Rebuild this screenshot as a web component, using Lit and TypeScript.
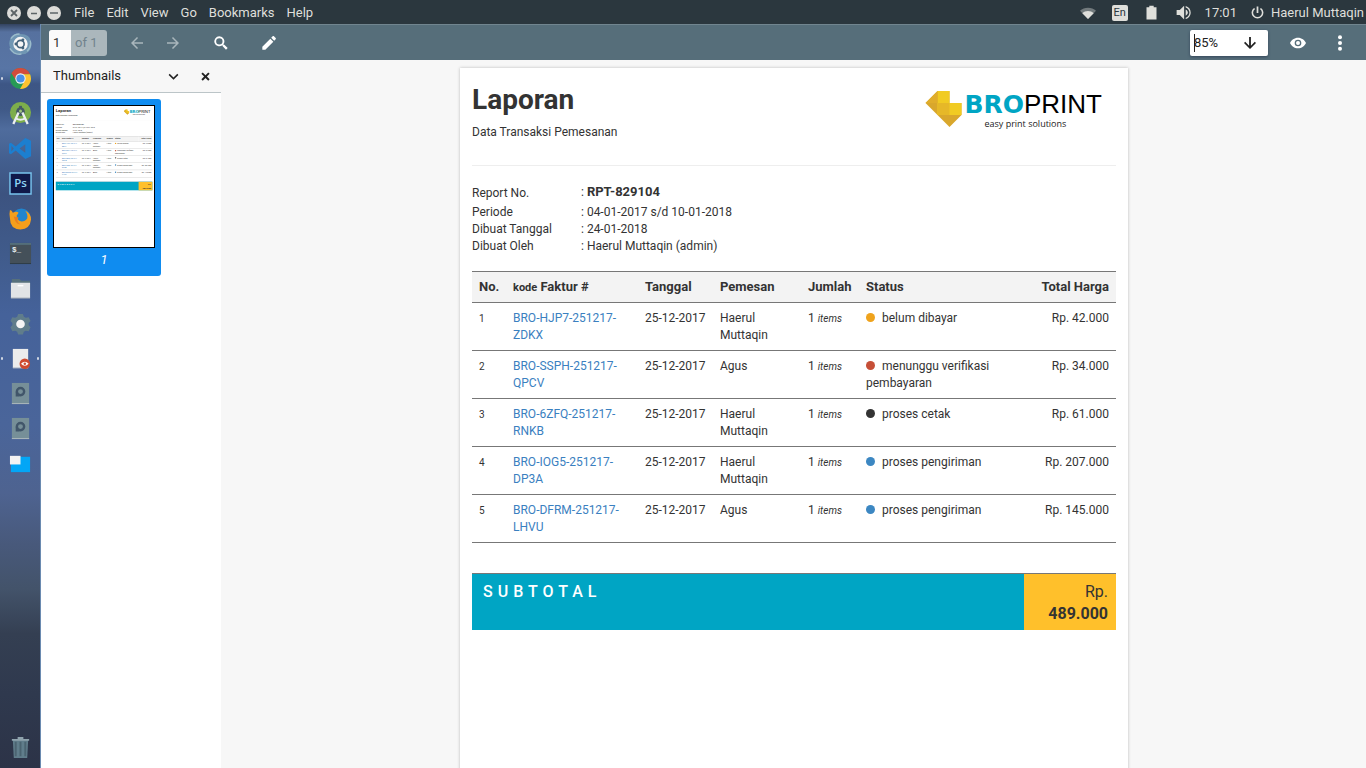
import { LitElement, html, css, svg } from "lit";
import { customElement, property } from "lit/decorators.js";
import { styleMap } from "lit/directives/style-map.js";

interface Order {
  code: string;
  customer: string;
  status: string;
  color: string;
  total: string;
}

const ORDERS: Order[] = [
  { code: "BRO-HJP7-251217-ZDKX", customer: "Haerul Muttaqin", status: "belum dibayar", color: "#efa31d", total: "Rp. 42.000" },
  { code: "BRO-SSPH-251217-QPCV", customer: "Agus", status: "menunggu verifikasi pembayaran", color: "#c64f37", total: "Rp. 34.000" },
  { code: "BRO-6ZFQ-251217-RNKB", customer: "Haerul Muttaqin", status: "proses cetak", color: "#333333", total: "Rp. 61.000" },
  { code: "BRO-IOG5-251217-DP3A", customer: "Haerul Muttaqin", status: "proses pengiriman", color: "#3c87c2", total: "Rp. 207.000" },
  { code: "BRO-DFRM-251217-LHVU", customer: "Agus", status: "proses pengiriman", color: "#3c87c2", total: "Rp. 145.000" },
];

@customElement("bro-report")
export class BroReport extends LitElement {
  static styles = css`
    :host {
      display: block;
      box-sizing: border-box;
      padding: 12px;
      background: #fff;
      color: #333;
      font: 12px/17px Roboto, sans-serif;
    }
    .head {
      display: flex;
      justify-content: space-between;
      align-items: flex-start;
      padding-bottom: 24px;
      border-bottom: 1px solid #eee;
    }
    h1 {
      margin: 0;
      font-size: 28px;
      line-height: 39px;
      font-weight: 700;
    }
    .subtitle {
      margin: 5px 0 0;
    }
    .logo {
      display: flex;
      padding: 10px 14px 0 0;
    }
    .mark {
      width: 38px;
      height: 38px;
    }
    .word {
      padding-left: 1px;
      color: #000;
      font: 26px/28px "Liberation Sans", Arial, sans-serif;
      white-space: nowrap;
    }
    .word b {
      color: #00a5c4;
      font-family: "DejaVu Sans", sans-serif;
      font-size: 25px;
      font-weight: 700;
    }
    .tag {
      display: block;
      padding-left: 20px;
      color: #222;
      font: 9px/9px "Open Sans", sans-serif;
    }
    .info {
      display: grid;
      grid-template-columns: 109px 1fr;
      grid-template-rows: 21px;
      margin: 17px 0 16px;
    }
    .info dt {
      align-self: center;
    }
    .info dd {
      margin: 0;
    }
    .info b {
      font-size: 13px;
    }
    table {
      width: 100%;
      border-collapse: separate;
      border-spacing: 0;
      table-layout: fixed;
    }
    th,
    td {
      box-sizing: border-box;
      padding: 7px 7px 6px;
      text-align: left;
      vertical-align: top;
      border-bottom: 1px solid #777;
    }
    th {
      padding-top: 6px;
      background: #f3f3f3;
      border-top: 1px solid #777;
      font-size: 13px;
      font-weight: 700;
      white-space: nowrap;
    }
    small {
      font-size: 10px;
    }
    th small {
      font-size: 11px;
    }
    a {
      color: #3a80c0;
      text-decoration: none;
    }
    .nowrap {
      white-space: nowrap;
    }
    .right {
      text-align: right;
    }
    .no {
      width: 34px;
    }
    .code {
      width: 132px;
    }
    .date {
      width: 75px;
    }
    .customer {
      width: 88px;
    }
    .count {
      width: 58px;
    }
    .status {
      width: 165px;
    }
    .total {
      width: 92px;
    }
    .dot {
      display: inline-block;
      width: 9px;
      height: 9px;
      margin-right: 7px;
      border-radius: 50%;
    }
    .subtotal {
      display: flex;
      margin-top: 30px;
      border-top: 1px solid #777;
      background: #00a5c4;
      color: #fff;
      font-size: 16px;
      line-height: 22px;
    }
    .caption {
      flex: 1;
      padding: 7px 11px 5px;
      font-weight: 500;
      letter-spacing: 5px;
    }
    .sum {
      box-sizing: border-box;
      width: 92px;
      padding: 7px 8px 5px;
      background: #ffc02b;
      color: #333;
      text-align: right;
    }
    .sum b {
      display: block;
      font-weight: 700;
    }
  `;

  render() {
    return html`
      <header class="head">
        <div>
          <h1>Laporan</h1>
          <p class="subtitle">Data Transaksi Pemesanan</p>
        </div>
        <div class="logo">
          <svg class="mark" viewBox="0 0 38 38" aria-hidden="true">
            <path d="M12.500 1H24.500V13H36.500V25L24.500 37L0.500 13Z" fill="#d9a72c" />
            <path d="M12.500 1H24.500V13H36.500V25H12.500Z" fill="#f1cb22" />
            <path d="M12.500 13H24.500V25H12.500Z" fill="#e6b828" />
            <path d="M0.500 13L12.500 1V13Z" fill="#e0ad2b" />
          </svg>
          <div class="word"><b>BRO</b>PRINT<span class="tag">easy print solutions</span></div>
        </div>
      </header>
      <dl class="info">
        <dt>Report No.</dt><dd>: <b>RPT-829104</b></dd>
        <dt>Periode</dt><dd>: 04-01-2017 s/d 10-01-2018</dd>
        <dt>Dibuat Tanggal</dt><dd>: 24-01-2018</dd>
        <dt>Dibuat Oleh</dt><dd>: Haerul Muttaqin (admin)</dd>
      </dl>
      <table>
        <thead>
          <tr>
            <th class="no">No.</th>
            <th class="code"><small>kode</small> Faktur #</th>
            <th class="date">Tanggal</th>
            <th class="customer">Pemesan</th>
            <th class="count">Jumlah</th>
            <th class="status">Status</th>
            <th class="total right">Total Harga</th>
          </tr>
        </thead>
        <tbody>
          ${ORDERS.map(
            (o, i) => html`<tr>
              <td><small>${i + 1}</small></td>
              <td><a href="#${o.code}">${o.code}</a></td>
              <td class="nowrap">25-12-2017</td>
              <td>${o.customer}</td>
              <td class="nowrap">1 <small><i>items</i></small></td>
              <td><span class="dot" style=${styleMap({ background: o.color })}></span>${o.status}</td>
              <td class="right">${o.total}</td>
            </tr>`
          )}
        </tbody>
      </table>
      <div class="subtotal">
        <span class="caption">SUBTOTAL</span>
        <span class="sum">Rp. <b>489.000</b></span>
      </div>
    `;
  }
}

const GLYPHS = {
  back: svg`<path d="M20 11H7.800l5.600-5.600L12 4l-8 8 8 8 1.400-1.400L7.800 13H20z"/>`,
  next: svg`<path d="M12 4l-1.400 1.400 5.600 5.600H4v2h12.200l-5.600 5.600L12 20l8-8z"/>`,
  down: svg`<path d="M20 12l-1.600-1.600-5.200 5.300V4h-2.400v11.700l-5.200-5.300L4 12l8 8z"/>`,
  search: svg`<path fill-rule="evenodd" d="M9.500 2a7.500 7.500 0 0 1 6 12l.5.500h1l5 5-2.500 2.500-5-5v-1l-.5-.5A7.500 7.500 0 1 1 9.500 2zm0 2.700a4.800 4.800 0 1 0 0 9.600 4.800 4.800 0 0 0 0-9.600z"/>`,
  pencil: svg`<path d="M2 17.500V22h4.500L18.500 10 14 5.500zM22 6.500c.6-.6.6-1.300 0-1.900L19.400 2c-.6-.6-1.300-.6-1.900 0l-2.200 2.200 4.500 4.500z"/>`,
  eye: svg`<path fill-rule="evenodd" d="M12 4C6.500 4 2 7.500 0 12c2 4.500 6.500 8 12 8s10-3.500 12-8c-2-4.500-6.500-8-12-8zm0 13a5 5 0 1 1 0-10 5 5 0 0 1 0 10zm0-8a3 3 0 1 0 0 6 3 3 0 0 0 0-6z"/>`,
  more: svg`<circle cx="12" cy="3.500" r="3"/><circle cx="12" cy="12" r="3"/><circle cx="12" cy="20.500" r="3"/>`,
  chevron: svg`<path d="M5 7l7 7 7-7 2 2-9 9-9-9z"/>`,
  close: svg`<path d="M6 3L12 9l6-6 3 3-6 6 6 6-3 3-6-6-6 6-3-3 6-6-6-6z"/>`,
  wifi: svg`<path opacity=".4" d="M12 4C7.300 4 3.200 5.800 0 8.500L12 21 24 8.500C20.800 5.800 16.700 4 12 4z"/><path d="M3.500 12.200L12 21l8.500-8.800C18.200 10.200 15.300 9 12 9s-6.200 1.200-8.500 3.200z"/>`,
  battery: svg`<path d="M8.500 1h7v2.500H20V23H4V3.500h4.500z"/>`,
  volume: svg`<path d="M1 8v8h5l7 7V1L6 8zM15.500 7v10c2-1 3.500-2.800 3.500-5s-1.500-4-3.500-5zM15.500 1.500v2.300c3.500 1.100 6 4.300 6 8.200s-2.500 7.100-6 8.200v2.300c4.700-1.200 8-5.400 8-10.500s-3.300-9.300-8-10.500z"/>`,
  power: svg`<path d="M10.400 1h3.200v12h-3.200zM18.500 3.500l-2.200 2.200A8 8 0 1 1 7.700 5.700L5.500 3.500a10.900 10.900 0 1 0 13 0z"/>`,
};

const DOCK = [
  { name: "Dash", art: svg`<path d="M1 8Q3 1 12 2Q22 2 23 10Q25 19 17 23Q6 24 2 18Q-1 13 1 8z" fill="#7096b3"/><path d="M2 7q3-5 9-5M22 9q2 6-3 11M13 23Q5 24 1 17" fill="none" stroke="#9bbccb" stroke-width="1.500"/><circle cx="12" cy="12.500" r="7.500" fill="#f5f5f5"/><circle cx="12" cy="12.500" r="3.800" fill="none" stroke="#43627a" stroke-width="1.700"/><circle cx="7.200" cy="12.500" r="1.500" fill="#43627a"/><circle cx="14.500" cy="8.200" r="1.500" fill="#43627a"/><circle cx="14.500" cy="16.800" r="1.500" fill="#43627a"/>` },
  { name: "Chrome", art: svg`<circle cx="12" cy="12" r="11" fill="#279a56"/><path d="M2.500 6.500A11 11 0 0 1 22 7.500H12L7.500 14z" fill="#d34b3c"/><path d="M22 7.500A11 11 0 0 1 11.500 23L16.500 14 12 7.500z" fill="#fdc231"/><circle cx="12" cy="12" r="5.400" fill="#f4f4f4"/><circle cx="12" cy="12" r="4.300" fill="#4a90e8"/>` },
  { name: "Android Studio", art: svg`<circle cx="12" cy="11" r="11" fill="#7dae4b"/><path d="M12 4v5" stroke="#455a64" stroke-width="3"/><circle cx="12" cy="10" r="4.500" fill="#455a64"/><path d="M10 11L4.500 23M14 11l5.500 12" stroke="#eceff1" stroke-width="2.400"/><path d="M7 17q5 3 10 0" fill="none" stroke="#eceff1" stroke-width="2"/><circle cx="12" cy="9.500" r="1.600" fill="#9fc47a"/>` },
  { name: "Visual Studio Code", art: svg`<path d="M17 1l6 3v16l-6 3L7 14l-5 4-2-1V7l2-1 5 4zM2.500 9v6L5 12zM17 7.500L11 12l6 4.500z" fill="#1c7fd0" fill-rule="evenodd"/>` },
  { name: "Photoshop", art: svg`<path d="M1 1h22v22H1z" fill="#10194a" stroke="#78c4ee" stroke-width="1.500"/><text x="12" y="16" text-anchor="middle" font-family="Open Sans, sans-serif" font-size="12" font-weight="600" fill="#8fd3f5">Ps</text>` },
  { name: "Firefox", art: svg`<circle cx="13" cy="11" r="9.500" fill="#2185ce"/><path d="M1 3q2 0 3 3 4-2 6 0l-2 3q0 5 5 6 4 0 6-3 1-4-2-8 6 3 6 9-1 10-11 10.500Q1 23 1 12 0 7 1 3z" fill="#f59f1c"/><path d="M5 10l5 1q-3 5 2 7-5 1-7-8z" fill="#ea7e20"/>` },
  { name: "Terminal", art: svg`<path d="M1 1h22v21H1z" fill="#445059"/><path d="M1 1h22v2H1z" fill="#546e7a"/><path d="M1 22h22v1H1z" fill="#2e3a41"/><text x="3" y="10" font-family="Liberation Mono, monospace" font-size="8" font-weight="700" fill="#e8eef0">$_</text>` },
  { name: "Files", art: svg`<path d="M3 2h8l2 2h9v7H3z" fill="#57707b"/><path d="M2 6h20v16H2z" fill="#e2e4e6"/><path d="M9 9h6" stroke="#fff" stroke-width="1.500"/><path d="M2 22h20" stroke="#a0a8b3"/>` },
  { name: "Settings", art: svg`<path d="M9.500 2h5l1 3 2 1 3-.5 2 4-2 2v2l2 2.500-2 4-3-.5-2 1-1 3h-5l-1-3-2-1-3 .5-2-4 2-2.500v-2l-2-2 2-4 3 .5 2-1z" fill="#607d8b"/><circle cx="12" cy="12.500" r="4.500" fill="#f5f5f5"/>` },
  { name: "Document Viewer", active: true, art: svg`<path d="M4 2h16v20H4z" fill="#ececec"/><path d="M4 22h16" stroke="#8e9db7"/><circle cx="16.500" cy="17.500" r="5.500" fill="#cf4b30"/><path d="M12.500 17.500q4-4 8 0-4 4-8 0z" fill="#fff"/><circle cx="16.500" cy="17.500" r="1.300" fill="#cf4b30"/>` },
  { name: "Drive", art: svg`<path d="M3 1h18v22H3z" fill="#768f98"/><circle cx="12" cy="10" r="3.800" fill="none" stroke="#41566a" stroke-width="2.500"/><path d="M7 10v5h4" fill="#41566a"/><path d="M3 22.500h18" stroke="#aeb9bd"/>` },
  { name: "Drive 2", art: svg`<path d="M3 1h18v22H3z" fill="#768f98"/><circle cx="12" cy="10" r="3.800" fill="none" stroke="#41566a" stroke-width="2.500"/><path d="M7 10v5h4" fill="#41566a"/><path d="M3 22.500h18" stroke="#aeb9bd"/>` },
  { name: "Workspaces", art: svg`<path d="M2 5h20v16H2z" fill="#03a6f6"/><path d="M1 4h11v9H1z" fill="#f3f3f3"/>` },
];

@customElement("app-root")
export class AppRoot extends LitElement {
  @property() zoomLevel = "85%";

  static styles = css`
    :host {
      display: flex;
      flex-direction: column;
      height: 100vh;
      overflow: hidden;
      background: #f7f7f7;
      color: #222;
      font: 13px/16px Roboto, sans-serif;
    }
    button,
    input,
    select {
      box-sizing: border-box;
      margin: 0;
      padding: 0;
      border: 0;
      border-radius: 0;
      outline: 0;
      background: none;
      color: inherit;
      font: inherit;
      appearance: none;
    }
    svg {
      display: block;
      fill: currentColor;
    }
    .panel {
      display: flex;
      justify-content: space-between;
      align-items: center;
      box-sizing: border-box;
      height: 24px;
      padding: 1px 2px 0 7px;
      background: #2b373e;
      color: #dfdfdb;
    }
    .group,
    .menus {
      display: flex;
      align-items: center;
    }
    .menus {
      gap: 12px;
      padding-left: 13px;
    }
    .window {
      display: grid;
      place-items: center;
      width: 14px;
      height: 14px;
      margin-right: 6px;
      border-radius: 50%;
      background: #dcdcd9;
      color: #5d6467;
    }
    .window:last-of-type {
      margin-right: 0;
    }
    .tray {
      display: flex;
      align-items: center;
    }
    .wifi {
      margin-right: 16px;
    }
    .lang {
      width: 16px;
      margin-right: 16px;
      border-radius: 2px;
      background: #dfdfdb;
      color: #2b373e;
      font-size: 11px;
      text-align: center;
    }
    .battery {
      margin-right: 17px;
    }
    .volume {
      margin-right: 14px;
    }
    .clock {
      margin-right: 14px;
    }
    .power {
      margin-right: 7px;
    }
    .desktop {
      display: flex;
      flex: 1;
      min-height: 0;
    }
    .dock {
      display: flex;
      flex-direction: column;
      box-sizing: border-box;
      width: 41px;
      padding: 2px 0 3px;
      border-right: 1px solid #6a8ab0;
      background: linear-gradient(#33435f 0, #56719f 8px, #5875a5 45px, #4c6a9b 52px, #3d5685 60px, #3f5987 85px, #4f6c9d 105px, #4a6797 120px, #435f8f 135px, #3c5380 170px, #405b8b 230px, #45629a 290px, #4a659a 400px, #4e6390 470px, #48597b 520px, #43536a 565px, #343f52 610px, #2f394e 670px, #2c3347 744px);
    }
    .launcher {
      display: flex;
      align-items: center;
      justify-content: space-between;
      width: 40px;
      height: 35px;
      padding: 0 1px;
    }
    .pip {
      width: 2px;
      height: 3px;
      border-radius: 1px;
    }
    .on {
      background: #cfd6e2;
    }
    .trash {
      margin-top: auto;
    }
    .app {
      display: flex;
      flex: 1;
      flex-direction: column;
      min-width: 0;
    }
    .toolbar {
      display: flex;
      align-items: center;
      justify-content: space-between;
      box-sizing: border-box;
      height: 36px;
      padding: 0 16px 0 8px;
      border-top: 1px solid #71858f;
      background: #566e7a;
      color: #fff;
    }
    .pager {
      display: flex;
      align-items: center;
      width: 58px;
      height: 26px;
      margin-right: 20px;
      border-radius: 3px;
      overflow: hidden;
      background: #abb7bc;
      color: #71838c;
    }
    .pager input {
      width: 22px;
      height: 26px;
      margin-right: 4px;
      padding-left: 4px;
      background: #fafafa;
      color: #333;
    }
    .tool {
      display: grid;
      place-items: center;
      width: 20px;
      height: 26px;
      margin-right: 16px;
    }
    .dim {
      color: #a9b6bc;
    }
    .find {
      margin: 0 28px 0 12px;
    }
    .zoom {
      display: flex;
      align-items: center;
      width: 78px;
      height: 26px;
      padding-left: 4px;
      box-sizing: border-box;
      border-radius: 2px;
      background: #fff;
      color: #222;
      box-shadow: 0 1px 3px #35465a;
    }
    .caret {
      width: 1px;
      height: 18px;
      margin-right: -1px;
      background: #222;
    }
    .zoom input {
      flex: 1;
      width: 20px;
    }
    .zoom button {
      width: 36px;
      height: 26px;
      display: grid;
      place-items: center;
    }
    .view {
      margin: 0 22px 0 20px;
    }
    .last {
      margin: 0;
    }
    .body {
      display: flex;
      flex: 1;
      min-height: 0;
    }
    .side {
      width: 180px;
      background: #fff;
    }
    .side-head {
      display: flex;
      align-items: center;
      height: 32px;
      padding: 0 10px 0 12px;
      border-bottom: 1px solid #bcc5c8;
      background: #f7f7f7;
    }
    .picker {
      display: grid;
      flex: 1;
      align-items: center;
      margin-right: 20px;
    }
    .picker > * {
      grid-area: 1 / 1;
    }
    .picker svg {
      justify-self: end;
      pointer-events: none;
    }
    .page-button {
      display: block;
      margin: 6px;
      padding: 6px 6px 8px;
      border-radius: 3px;
      background: #0f8cf0;
      color: #fff;
      font-style: italic;
    }
    .preview {
      display: block;
      width: 100px;
      height: 141px;
      margin-bottom: 4px;
      overflow: hidden;
      border: 1px solid #000;
      background: #fff;
      text-align: left;
      font-style: normal;
    }
    .mini {
      width: 668px;
      transform: scale(0.15);
      transform-origin: 0 0;
    }
    .canvas {
      display: flex;
      flex: 1;
      justify-content: center;
      align-items: flex-start;
      padding: 8px 0 0 1px;
      overflow: hidden;
    }
    .sheet {
      width: 668px;
      min-height: 944px;
      box-shadow: 0 0 3px #bbb;
    }
  `;

  private icon(name: keyof typeof GLYPHS, size: number) {
    return html`<svg width=${size} height=${size} viewBox="0 0 24 24" aria-hidden="true">${GLYPHS[name]}</svg>`;
  }

  render() {
    return html`
      <header class="panel">
        <div class="group">
          <button class="window" aria-label="Close window">
            <svg width="8" height="8" viewBox="0 0 8 8"><path d="M1 1l6 6M7 1L1 7" stroke="currentColor" stroke-width="1.800" /></svg>
          </button>
          <button class="window" aria-label="Minimize">
            <svg width="8" height="8" viewBox="0 0 8 8"><path d="M1 4.500h6" stroke="currentColor" stroke-width="1.500" /></svg>
          </button>
          <button class="window" aria-label="Restore">
            <svg width="8" height="8" viewBox="0 0 8 8"><path d="M0 4h8" stroke="currentColor" stroke-width="1.500" /></svg>
          </button>
          <nav class="menus">
            ${["File", "Edit", "View", "Go", "Bookmarks", "Help"].map((m) => html`<button>${m}</button>`)}
          </nav>
        </div>
        <div class="tray">
          <span class="wifi">${this.icon("wifi", 16)}</span>
          <span class="lang">En</span>
          <span class="battery">${this.icon("battery", 15)}</span>
          <span class="volume">${this.icon("volume", 15)}</span>
          <time class="clock">17:01</time>
          <span class="power">${this.icon("power", 13)}</span>
          <span>Haerul Muttaqin</span>
        </div>
      </header>
      <div class="desktop">
        <nav class="dock" aria-label="Launcher">
          ${DOCK.map(
            (d) => html`<button class="launcher" aria-label=${d.name}>
              <span class="pip ${d.active || d.name === "Chrome" ? "on" : ""}"></span>
              <svg width="23" height="23" viewBox="0 0 24 24">${d.art}</svg>
              <span class="pip ${d.active ? "on" : ""}"></span>
            </button>`
          )}
          <button class="launcher trash" aria-label="Trash">
            <span class="pip"></span>
            <svg width="23" height="23" viewBox="0 0 24 24">
              <path d="M4 4h16l-1 19H5z" fill="#607d8b" />
              <path d="M7 6v15M12 6v15M17 6v15" stroke="#4b6471" stroke-width="2" />
              <path d="M3 4h18M9 2h6" stroke="#8fa3ad" stroke-width="2" />
            </svg>
            <span class="pip"></span>
          </button>
        </nav>
        <main class="app">
          <div class="toolbar">
            <div class="group">
              <div class="pager"><input aria-label="Page" .value=${"1"} /><span>of 1</span></div>
              <button class="tool dim" aria-label="Previous page">${this.icon("back", 18)}</button>
              <button class="tool dim" aria-label="Next page">${this.icon("next", 18)}</button>
              <button class="tool find" aria-label="Find">${this.icon("search", 16)}</button>
              <button class="tool" aria-label="Annotate">${this.icon("pencil", 16)}</button>
            </div>
            <div class="group">
              <div class="zoom">
                <span class="caret"></span>
                <input aria-label="Zoom" .value=${this.zoomLevel} />
                <button aria-label="Zoom options">${this.icon("down", 18)}</button>
              </div>
              <button class="tool view" aria-label="View options">${this.icon("eye", 16)}</button>
              <button class="tool last" aria-label="More">${this.icon("more", 16)}</button>
            </div>
          </div>
          <div class="body">
            <aside class="side">
              <div class="side-head">
                <div class="picker">
                  <select aria-label="Side pane"><option>Thumbnails</option></select>
                  ${this.icon("chevron", 13)}
                </div>
                <button aria-label="Close side pane">${this.icon("close", 11)}</button>
              </div>
              <button class="page-button">
                <span class="preview" aria-hidden="true" inert><bro-report class="mini"></bro-report></span>
                1
              </button>
            </aside>
            <section class="canvas"><bro-report class="sheet"></bro-report></section>
          </div>
        </main>
      </div>
    `;
  }
}
